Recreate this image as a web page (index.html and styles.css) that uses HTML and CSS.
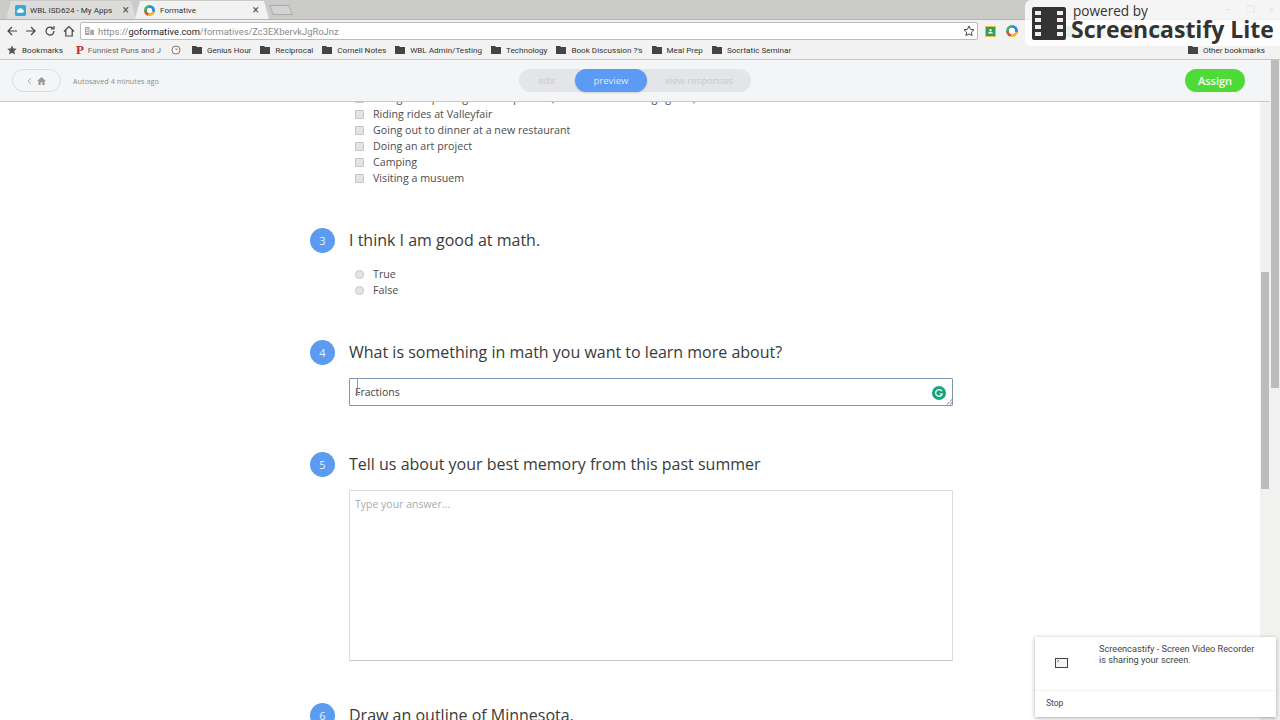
FILE: index.html
```html
<!DOCTYPE html>
<html lang="en">
<head>
<meta charset="UTF-8">
<title>Formative</title>
<link rel="stylesheet" href="styles.css">
</head>
<body>

<div class="tab-strip">
    <div class="tab">
        <svg class="favicon" viewBox="0 0 12 12"><rect width="12" height="12" rx="2" fill="#3ba7d9"/><path d="M3.500 8.500a1.500 1.500 0 0 1 0-3 2.500 2.500 0 0 1 4.700-.6A1.900 1.900 0 0 1 8.500 8.500z" fill="#fff"/></svg>
        <span class="tab-title">WBL ISD624 - My Apps</span>
        <span class="tab-close">&times;</span>
    </div>
    <div class="tab tab-active">
        <span class="ring ring-tab"></span>
        <span class="tab-title">Formative</span>
        <span class="tab-close">&times;</span>
    </div>
    <div class="tab-new"></div>
    <div class="window-controls"><span>&ndash;</span><span>&#10064;</span><span>&times;</span></div>
</div>

<div class="toolbar">
    <svg class="nav-icon" viewBox="0 0 12 12"><path d="M11 6H2M6 2L2 6l4 4"/></svg>
    <svg class="nav-icon" viewBox="0 0 12 12"><path d="M1 6h9M6 2l4 4-4 4"/></svg>
    <svg class="nav-icon" viewBox="0 0 12 12"><path d="M10 6a4 4 0 1 1-1.200-2.800M10 1v3H7"/></svg>
    <svg class="nav-icon" viewBox="0 0 12 12"><path d="M1 6.500L6 1.500l5 5M2.800 5.500V11h6.400V5.500"/></svg>
    <div class="url-box">
        <svg class="site-icon" viewBox="0 0 10 9"><path d="M0 0h5v9H0zM6 3h4v6H6z" fill="#a5a5a5"/><path d="M1 2h3M1 4h3M1 6h3" stroke="#fff"/></svg>
        <span class="url"><span class="url-dim">https://</span>goformative.com<span class="url-dim">/formatives/Zc3EXbervkJgRoJnz</span></span>
        <svg class="star-icon" viewBox="0 0 12 12"><path d="M6 1l1.500 3.300 3.500.4-2.600 2.400.7 3.500L6 8.900l-3.100 1.700.7-3.500L1 4.700l3.500-.4z"/></svg>
    </div>
    <div class="extensions">
        <span class="ext ext-classroom"><svg viewBox="0 0 11 10"><circle cx="5.500" cy="3.800" r="1.500" fill="#fff"/><path d="M2.500 8c0-3 6-3 6 0z" fill="#fff"/></svg></span>
        <span class="ring ring-ext"></span>
        <span class="ext ext-faint ext-grey"></span>
        <span class="ext ext-faint ext-green"></span>
        <span class="ext ext-faint ext-tan"></span>
        <span class="ext ext-faint ext-pink"></span>
        <span class="ext ext-faint ext-teal"></span>
        <span class="ext ext-faint ext-mint"></span>
    </div>
</div>

<div class="bookmarks">
    <span class="bookmark"><svg class="bm-star" viewBox="0 0 12 12"><path d="M6 .5l1.700 3.700 4 .4-3 2.700.9 4L6 9.300l-3.600 2 .9-4-3-2.700 4-.4z"/></svg>Bookmarks</span>
    <span class="bookmark bm-puns"><span class="bm-p">P</span>Funniest Puns and J</span>
    <span class="bookmark"><svg class="bm-clock" viewBox="0 0 10 10"><circle cx="5" cy="5" r="4" fill="#fff" stroke="#777"/><path d="M5 2.800V5l1.600-1" stroke="#e8772e" fill="none"/></svg></span>
    <span class="bookmark"><svg class="folder" viewBox="0 0 10 8"><path d="M0 0h4l1 1h5v7H0z"/></svg>Genius Hour</span>
    <span class="bookmark"><svg class="folder" viewBox="0 0 10 8"><path d="M0 0h4l1 1h5v7H0z"/></svg>Reciprocal</span>
    <span class="bookmark"><svg class="folder" viewBox="0 0 10 8"><path d="M0 0h4l1 1h5v7H0z"/></svg>Cornell Notes</span>
    <span class="bookmark"><svg class="folder" viewBox="0 0 10 8"><path d="M0 0h4l1 1h5v7H0z"/></svg>WBL Admin/Testing</span>
    <span class="bookmark"><svg class="folder" viewBox="0 0 10 8"><path d="M0 0h4l1 1h5v7H0z"/></svg>Technology</span>
    <span class="bookmark"><svg class="folder" viewBox="0 0 10 8"><path d="M0 0h4l1 1h5v7H0z"/></svg>Book Discussion ?'s</span>
    <span class="bookmark"><svg class="folder" viewBox="0 0 10 8"><path d="M0 0h4l1 1h5v7H0z"/></svg>Meal Prep</span>
    <span class="bookmark"><svg class="folder" viewBox="0 0 10 8"><path d="M0 0h4l1 1h5v7H0z"/></svg>Socrtatic Seminar</span>
    <span class="bookmark bm-other"><svg class="folder" viewBox="0 0 10 8"><path d="M0 0h4l1 1h5v7H0z"/></svg>Other bookmarks</span>
</div>

<div class="viewport">
    <div class="app">
        <div class="app-header">
            <div class="header-left">
                <div class="home-pill">
                    <svg class="pill-chevron" viewBox="0 0 5 8"><path d="M4 1L1 4l3 3"/></svg>
                    <svg class="pill-home" viewBox="0 0 10 9"><path d="M5 0L0 4.500h1.500V9h2.500V6h2v3h2.500V4.500H10z"/></svg>
                </div>
                <span class="autosaved">Autosaved 4 minutes ago</span>
            </div>
            <div class="mode-switch">
                <span class="mode mode-edit">edit</span>
                <span class="mode mode-preview">preview</span>
                <span class="mode mode-responses">view responses</span>
            </div>
            <button class="assign" type="button">Assign</button>
        </div>

        <div class="app-body">
            <div class="questions">
                <div class="question">
                    <div class="options">
                        <label class="option"><span class="check"></span>Going to a sporting event in person (like a Twins or Vikings game)</label>
                        <label class="option"><span class="check"></span>Riding rides at Valleyfair</label>
                        <label class="option"><span class="check"></span>Going out to dinner at a new restaurant</label>
                        <label class="option"><span class="check"></span>Doing an art project</label>
                        <label class="option"><span class="check"></span>Camping</label>
                        <label class="option"><span class="check"></span>Visiting a musuem</label>
                    </div>
                </div>

                <div class="question">
                    <div class="question-head"><span class="number">3</span><h2>I think I am good at math.</h2></div>
                    <div class="options">
                        <label class="option"><span class="radio"></span>True</label>
                        <label class="option"><span class="radio"></span>False</label>
                    </div>
                </div>

                <div class="question question-text">
                    <div class="question-head"><span class="number">4</span><h2>What is something in math you want to learn more about?</h2></div>
                    <div class="answer answer-filled">
                        <textarea class="answer-box answer-short">Fractions</textarea>
                        <span class="grammarly"><svg viewBox="0 0 14 14"><path d="M10 5.200A3.400 3.400 0 1 0 10.300 8H7.600"/></svg></span>
                        <svg class="ibeam" viewBox="0 0 5 17"><path d="M0 .5h5M2.500.5v16M0 16.500h5"/></svg>
                    </div>
                </div>

                <div class="question">
                    <div class="question-head"><span class="number">5</span><h2>Tell us about your best memory from this past summer</h2></div>
                    <div class="answer">
                        <textarea class="answer-box answer-tall" placeholder="Type your answer..."></textarea>
                    </div>
                </div>

                <div class="question">
                    <div class="question-head"><span class="number">6</span><h2>Draw an outline of Minnesota.</h2></div>
                </div>
            </div>
            <div class="scroll-track scroll-inner"><div class="scroll-thumb"></div></div>
        </div>
    </div>
    <div class="scroll-track scroll-outer"><div class="scroll-thumb"></div></div>
</div>

<div class="watermark">
    <svg class="film" viewBox="0 0 34 33"><rect width="34" height="33" rx="2" fill="#333"/><path d="M3 4h6v4H3zM3 11h6v4H3zM3 18h6v4H3zM3 25h6v4H3zM25 4h6v4h-6zM25 11h6v4h-6zM25 18h6v4h-6zM25 25h6v4h-6z" fill="#eee"/></svg>
    <div class="watermark-text">
        <span class="powered">powered by</span>
        <span class="brand">Screencastify Lite</span>
    </div>
</div>

<div class="share-notice">
    <div class="share-main">
        <svg class="share-icon" viewBox="0 0 13 10"><rect x=".5" y=".5" width="12" height="9" fill="#f4f4f4" stroke="#444"/><path d="M2 4l2-2" stroke="#777"/></svg>
        <p>Screencastify - Screen Video Recorder is sharing your screen.</p>
    </div>
    <div class="share-stop">Stop</div>
</div>

</body>
</html>
```

FILE: styles.css
```css
html, body {
    height: 720px;
    overflow: hidden;
}
body {
    margin: 0;
    font-family: "Open Sans", sans-serif;
    background-color: #fff;
    display: flex;
    flex-direction: column;
}

/* browser chrome */
.tab-strip {
    height: 19px;
    flex: none;
    display: flex;
    align-items: flex-end;
    padding-left: 6px;
    background-color: #cbccca;
    font-family: Roboto, sans-serif;
    font-size: 8.100px;
    color: #333;
}
.tab {
    width: 130px;
    height: 18px;
    margin-right: -1px;
    padding: 0 7px 0 9px;
    box-sizing: border-box;
    display: flex;
    align-items: center;
    background-color: #dcdddb;
    white-space: nowrap;
    clip-path: polygon(0 100%, 5px 0, calc(100% - 5px) 0, 100% 100%);
}
.tab-active {
    width: 134px;
    padding: 0 10px 0 9px;
    background-color: #f2f2f2;
}
.favicon {
    width: 11px;
    height: 11px;
    margin-right: 4px;
}
.ring {
    display: inline-block;
    border-radius: 50%;
    background:
        radial-gradient(circle, #fff 0 35%, transparent 37%),
        conic-gradient(#2e8be8 0 30%, #f2b632 30% 55%, #e0513d 55% 75%, #45b36b 75%);
}
.ring-tab {
    width: 11px;
    height: 11px;
    margin-right: 5px;
}
.ring-ext {
    width: 12px;
    height: 12px;
    margin-left: 10px;
}
.tab-title {
    flex: 1;
}
.tab-close {
    font-size: 12px;
    line-height: 12px;
    color: #555;
}
.tab-new {
    width: 18px;
    height: 8px;
    margin: 0 0 4px 3px;
    background-color: #d3d4d2;
    border: 1px solid #aaa;
    transform: skewX(20deg);
}
.window-controls {
    margin-left: auto;
    padding-right: 6px;
    height: 19px;
    display: flex;
    gap: 14px;
    align-items: center;
    color: #777;
    font-size: 10px;
}

.toolbar {
    height: 22px;
    flex: none;
    box-sizing: border-box;
    padding: 2px 0 1px 6px;
    display: flex;
    align-items: center;
    gap: 7px;
    background-color: #f2f2f2;
    border-top: 1px solid #b5b5b5;
}
.nav-icon {
    width: 12px;
    height: 12px;
    fill: none;
    stroke: #444;
    stroke-width: 1.2;
}
.url-box {
    width: 898px;
    height: 18px;
    box-sizing: border-box;
    margin-left: -2px;
    padding: 0 2px 0 4px;
    display: flex;
    align-items: center;
    background-color: #fff;
    border: 1px solid #bbb;
    border-radius: 2px;
    font-family: Roboto, sans-serif;
    font-size: 9.400px;
    color: #222;
}
.site-icon {
    width: 9px;
    height: 8px;
    margin-right: 4px;
}
.url {
    flex: 1;
}
.url-dim {
    color: #8a8a8a;
}
.star-icon {
    width: 12px;
    height: 12px;
    fill: none;
    stroke: #444;
}
.extensions {
    display: flex;
    align-items: center;
}
.ext {
    display: block;
    width: 11px;
    height: 11px;
}
.ext svg {
    display: block;
}
.ext-classroom {
    background-color: #2f9e5a;
    border: 1px solid #e6c13c;
    box-sizing: border-box;
}
.ext-faint {
    margin-left: 18px;
}
.ext-grey { background-color: #999; }
.ext-green { background-color: #79c47f; }
.ext-tan { background-color: #c9b58c; }
.ext-pink { background-color: #e06a86; }
.ext-teal { background-color: #63c7a6; }
.ext-mint { background-color: #9fdcc0; }

.bookmarks {
    height: 19px;
    flex: none;
    box-sizing: border-box;
    padding-left: 7px;
    display: flex;
    align-items: center;
    gap: 9px;
    background-color: #f2f2f2;
    border-bottom: 1px solid #c4c4c4;
    font-family: Roboto, sans-serif;
    font-size: 8.100px;
    color: #333;
    white-space: nowrap;
}
.bookmark {
    display: flex;
    align-items: center;
    gap: 5px;
}
.bm-star {
    width: 10px;
    height: 10px;
    fill: #555;
}
.bm-puns {
    margin-left: 4px;
    color: #666;
}
.bm-p {
    font-family: "Liberation Serif", serif;
    font-size: 13px;
    font-weight: bold;
    color: #c8262c;
    margin-right: -1px;
}
.bm-clock {
    width: 10px;
    height: 10px;
    margin: 0 2px 0 1px;
}
.folder {
    width: 10px;
    height: 8px;
    fill: #444;
}
.bm-other {
    margin-left: auto;
    padding-right: 15px;
}

/* page area */
.viewport {
    flex: 1;
    min-height: 0;
    display: flex;
}
.app {
    flex: 1;
    min-width: 0;
    display: flex;
    flex-direction: column;
}
.app-header {
    height: 42px;
    flex: none;
    box-sizing: border-box;
    padding: 9px 25px 0 12px;
    display: flex;
    align-items: flex-start;
    background-color: #f4f5f6;
    border-bottom: 1px solid #c8c8c8;
}
.header-left {
    width: 507px;
    display: flex;
    align-items: center;
    gap: 12px;
}
.home-pill {
    width: 49px;
    height: 23px;
    box-sizing: border-box;
    display: flex;
    align-items: center;
    justify-content: center;
    gap: 5px;
    border: 1px solid #dcdcdc;
    border-radius: 12px;
}
.pill-chevron {
    width: 5px;
    height: 8px;
    fill: none;
    stroke: #aaa;
}
.pill-home {
    width: 9px;
    height: 8px;
    fill: #999;
}
.autosaved {
    font-size: 7.300px;
    color: #8d8d8d;
}
.mode-switch {
    width: 232px;
    height: 23px;
    display: flex;
    align-items: center;
    background-color: #e3e5e8;
    border-radius: 12px;
    font-size: 9.500px;
    color: #c6c9cd;
}
.mode {
    text-align: center;
}
.mode-edit {
    width: 56px;
}
.mode-preview {
    width: 72px;
    height: 23px;
    line-height: 23px;
    color: #dfeafc;
    background-color: #5b9bf3;
    border-radius: 12px;
    box-shadow: 0 1px 2px rgba(0, 0, 0, 0.15);
}
.mode-responses {
    flex: 1;
}
.assign {
    width: 60px;
    height: 23px;
    margin-left: auto;
    padding: 0;
    background-color: #4fdb37;
    color: #fff;
    border: none;
    border-radius: 12px;
    font-family: "Open Sans", sans-serif;
    font-size: 11px;
    font-weight: 600;
}

.app-body {
    flex: 1;
    min-height: 0;
    display: flex;
    overflow: hidden;
}
.questions {
    flex: 1;
    min-width: 0;
    margin-top: -12px;
    padding-left: 310px;
    padding-right: 307px;
}
.question {
    padding-bottom: 42px;
}
.question-text {
    padding-bottom: 46px;
}
.question-head {
    display: flex;
    align-items: center;
    gap: 14px;
    height: 25px;
    margin-bottom: 13px;
}
.question-head h2 {
    margin: -2px 0 0;
    font-size: 16px;
    font-weight: 400;
    color: #3a3a3a;
}
.number {
    width: 25px;
    height: 25px;
    flex: none;
    border-radius: 50%;
    background-color: #5b9bf0;
    color: #e9f1fd;
    font-size: 11px;
    line-height: 25px;
    text-align: center;
}
.options {
    padding-left: 45px;
}
.option {
    display: flex;
    align-items: center;
    gap: 9px;
    height: 16px;
    font-size: 10.700px;
    line-height: 14px;
    color: #4d4d4d;
}
.check, .radio {
    width: 7px;
    height: 7px;
    flex: none;
    background-color: #e4e4e4;
    border: 1px solid #c4c4c4;
}
.check {
    border-radius: 1px;
}
.radio {
    border-radius: 50%;
}
.answer {
    position: relative;
    margin-left: 39px;
}
.answer-box {
    display: block;
    width: 100%;
    box-sizing: border-box;
    margin: 0;
    padding: 6px 5px;
    background-color: #fff;
    border: 1px solid #dcdcdc;
    border-bottom-color: #c4c4c4;
    border-radius: 1px;
    outline: none;
    font-family: "Open Sans", sans-serif;
    font-size: 10.500px;
    line-height: 15px;
    color: #444;
    overflow: hidden;
}
.answer-box::placeholder {
    color: #aaa;
}
.answer-short {
    height: 28px;
    border-color: #7f97b5;
}
.answer-short::-webkit-resizer {
    background: linear-gradient(135deg, transparent 50%, #bbb 50%, #bbb 62%, transparent 62%, transparent 75%, #bbb 75%, #bbb 87%, transparent 87%) right bottom / 6px 6px no-repeat;
}
.answer-tall {
    height: 171px;
    resize: none;
}
.grammarly {
    position: absolute;
    right: 7px;
    top: 8px;
    width: 14px;
    height: 14px;
    border-radius: 50%;
    background-color: #17a67c;
}
.grammarly svg {
    display: block;
    fill: none;
    stroke: #fff;
    stroke-width: 1.2;
}
.ibeam {
    position: absolute;
    left: 6px;
    top: 0;
    width: 5px;
    height: 17px;
    fill: none;
    stroke: #999;
}

/* scrollbars */
.scroll-track {
    width: 10px;
    flex: none;
    box-sizing: border-box;
    background-color: #f1f1ef;
}
.scroll-thumb {
    width: 8px;
    margin-left: 1px;
    background-color: #bcbcbc;
}
.scroll-inner {
    padding-top: 170px;
}
.scroll-inner .scroll-thumb {
    height: 217px;
}
.scroll-outer .scroll-thumb {
    height: 328px;
}

/* overlays */
.watermark {
    position: absolute;
    top: 0;
    right: 0;
    width: 255px;
    height: 46px;
    box-sizing: border-box;
    padding: 7px 0 0 7px;
    display: flex;
    gap: 5px;
    background-color: rgba(255, 255, 255, 0.8);
    border-radius: 6px 0 0 6px;
    color: #333;
}
.film {
    width: 34px;
    height: 33px;
    flex: none;
}
.watermark-text {
    display: flex;
    flex-direction: column;
    margin-top: -5px;
}
.powered {
    font-size: 13.600px;
    line-height: 17px;
    margin-left: 2px;
}
.brand {
    margin-top: -2px;
    font-size: 23px;
    line-height: 25px;
    font-weight: bold;
    white-space: nowrap;
}
.share-notice {
    position: absolute;
    left: 1035px;
    top: 637px;
    width: 241px;
    height: 80px;
    background-color: #fff;
    box-shadow: 0 1px 4px rgba(0, 0, 0, 0.35);
    font-family: Roboto, sans-serif;
    font-size: 9.200px;
    color: #444;
}
.share-main {
    height: 54px;
    box-sizing: border-box;
    padding: 6px 15px 0 20px;
    display: flex;
    gap: 31px;
    border-bottom: 1px solid #f3f3f3;
}
.share-main p {
    margin: 0;
    line-height: 11px;
}
.share-icon {
    width: 13px;
    height: 10px;
    flex: none;
    margin-top: 15px;
}
.share-stop {
    padding: 7px 0 0 11px;
    font-size: 8.500px;
}
```
